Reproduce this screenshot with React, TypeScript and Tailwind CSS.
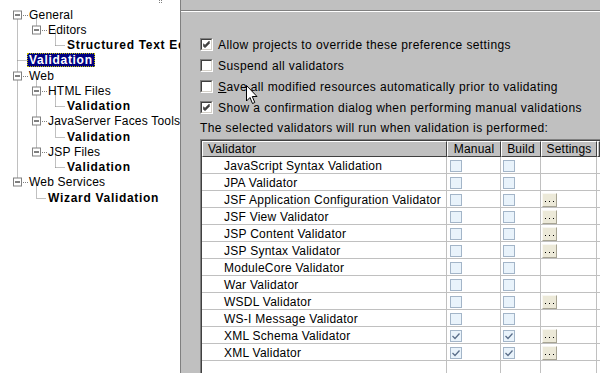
const RH = 15.25;
const TOP = 7;
const cy = (i: number) => Math.round(TOP + RH * i + RH / 2) + 0.5;

const tree = [
  { label: "General", x: 29, box: 17 },
  { label: "Editors", x: 48, box: 36 },
  { label: "Structured Text Editors", x: 67, bold: true },
  { label: "Validation", x: 27, bold: true, selected: true },
  { label: "Web", x: 29, box: 17 },
  { label: "HTML Files", x: 48, box: 36 },
  { label: "Validation", x: 67, bold: true },
  { label: "JavaServer Faces Tools", x: 48, box: 36 },
  { label: "Validation", x: 67, bold: true },
  { label: "JSP Files", x: 48, box: 36 },
  { label: "Validation", x: 67, bold: true },
  { label: "Web Services", x: 29, box: 17 },
  { label: "Wizard Validation", x: 48, bold: true },
];

const validators = [
  { name: "JavaScript Syntax Validation", on: false, settings: false },
  { name: "JPA Validator", on: false, settings: false },
  { name: "JSF Application Configuration Validator", on: false, settings: true },
  { name: "JSF View Validator", on: false, settings: true },
  { name: "JSP Content Validator", on: false, settings: true },
  { name: "JSP Syntax Validator", on: false, settings: true },
  { name: "ModuleCore Validator", on: false, settings: false },
  { name: "War Validator", on: false, settings: false },
  { name: "WSDL Validator", on: false, settings: true },
  { name: "WS-I Message Validator", on: false, settings: false },
  { name: "XML Schema Validator", on: true, settings: true },
  { name: "XML Validator", on: true, settings: true },
];

function TreeLines() {
  const v = (x: number, a: number, b: number, k: string) => (
    <line key={k} x1={x} x2={x} y1={cy(a)} y2={cy(b)} />
  );
  const h = (y: number, a: number, b: number, k: string) => (
    <line key={k} x1={a} x2={b} y1={cy(y)} y2={cy(y)} />
  );
  return (
    <svg className="absolute left-0 top-0" width="180" height="373">
      <g stroke="#808080" strokeDasharray="1 1" fill="none">
        {v(17.5, 0, 11, "r")}
        {v(36.5, 0, 1, "g")}
        {v(55.5, 1, 2, "e")}
        {h(2, 55.5, 65, "e2")}
        {h(3, 17.5, 27, "v")}
        {v(36.5, 4, 9, "w")}
        {v(55.5, 5, 6, "h")}
        {h(6, 55.5, 65, "h2")}
        {v(55.5, 7, 8, "j")}
        {h(8, 55.5, 65, "j2")}
        {v(55.5, 9, 10, "p")}
        {h(10, 55.5, 65, "p2")}
        {v(36.5, 11, 12, "s")}
        {h(12, 36.5, 46, "s2")}
        {tree.map((t, i) =>
          t.box ? h(i, t.box + 4, t.x - 1, "b" + i) : null
        )}
      </g>
      {tree.map((t, i) =>
        t.box ? (
          <g key={"x" + i}>
            <rect x={t.box - 4 + 0.5} y={cy(i) - 4.5} width="8" height="8" fill="#fff" stroke="#808080" />
            <line x1={t.box - 2} x2={t.box + 3} y1={cy(i) - 0.5} y2={cy(i) - 0.5} stroke="#000" />
          </g>
        ) : null
      )}
      <g fill="#808080">
        <rect x="159" y="0" width="1" height="1" />
        <rect x="161" y="0" width="1" height="1" />
        <rect x="159" y="2" width="1" height="1" />
        <rect x="161" y="2" width="1" height="1" />
      </g>
    </svg>
  );
}

function Tree() {
  return (
    <div className="relative w-[180px] shrink-0 bg-white overflow-hidden">
      <TreeLines />
      <div className="relative pt-[7px]">
        {tree.map((t, i) => (
          <div key={i} className="h-[15.25px] flex items-center whitespace-nowrap" style={{ paddingLeft: t.x }}>
            {t.selected ? (
              <span className="h-[14px] px-[1px] leading-[12px] bg-[#000080] text-white font-bold tracking-[0.7px] border border-dotted border-[#c0c000]">
                {t.label}
              </span>
            ) : (
              <span className={t.bold ? "font-bold tracking-[0.7px] text-black" : "tracking-[0.2px] text-black"}>{t.label}</span>
            )}
          </div>
        ))}
      </div>
    </div>
  );
}

function ClassicBox({ on }: { on: boolean }) {
  return (
    <div className="w-[13px] h-[13px] shrink-0 border border-t-[#808080] border-l-[#808080] border-b-white border-r-white">
      <div className="w-full h-full bg-white border border-t-[#404040] border-l-[#404040] border-b-[#d4d0c8] border-r-[#d4d0c8] flex items-center justify-center">
        {on && (
          <svg width="7" height="7" viewBox="0 0 7 7">
            <path d="M0 2.5 L2 4.5 L6.5 0 M0 3.5 L2 5.5 L6.5 1 M0 4.5 L2 6.5 L6.5 2" stroke="#000" strokeWidth="1" fill="none" />
          </svg>
        )}
      </div>
    </div>
  );
}

function CellBox({ on }: { on: boolean }) {
  return (
    <div className="w-[12px] h-[12px] border border-[#a3b5c8] bg-[#e9f3fb] flex items-center justify-center">
      {on && (
        <svg width="8" height="7" viewBox="0 0 8 7">
          <path d="M0.5 3 L3 5.5 L7.5 0.5" stroke="#5b6f8a" strokeWidth="1.3" fill="none" />
        </svg>
      )}
    </div>
  );
}

function DotsButton() {
  return (
    <div className="w-[15px] h-[14px] bg-[#ece9d8] border border-t-[#f8f7f2] border-l-[#f8f7f2] border-b-[#a7a493] border-r-[#a7a493] flex items-center justify-center">
      <svg width="9" height="3" viewBox="0 0 9 3" className="mt-[3px]">
        <rect x="0" y="1" width="1" height="1" fill="#000" />
        <rect x="4" y="1" width="1" height="1" fill="#000" />
        <rect x="8" y="1" width="1" height="1" fill="#000" />
      </svg>
    </div>
  );
}

function Option({ on, children }: { on: boolean; children: React.ReactNode }) {
  return (
    <div className="h-[21px] flex items-center gap-[5px]">
      <ClassicBox on={on} />
      <span className="tracking-[0.4px]">{children}</span>
    </div>
  );
}

const cols = "grid grid-cols-[245px_54px_40px_56px_1fr]";

function Cursor() {
  return (
    <svg className="absolute left-[246px] top-[85px]" width="13" height="20" viewBox="0 0 13 20">
      <path d="M0.5 0.5 L0.5 16 L4 12.5 L6.5 18.5 L8.8 17.5 L6.3 11.5 L11 11.5 Z" fill="#fff" stroke="#000" strokeWidth="1" />
    </svg>
  );
}

export default function App() {
  return (
    <div className="relative w-[600px] h-[373px] flex overflow-hidden bg-[#c0c0c0] font-['Liberation_Sans',Arial,sans-serif] text-[12px] text-black">
      <Tree />
      <div className="w-px shrink-0 bg-[#808080]" />
      <div className="flex-1 flex flex-col min-w-0">
        <div className="h-[10px] shrink-0" />
        <div className="h-[2px] shrink-0 border-t border-t-[#808080] border-b border-b-white" />
        <div className="pl-[19px] pt-[22px] flex flex-col">
          <Option on>Allow projects to override these preference settings</Option>
          <Option on={false}>Suspend all validators</Option>
          <Option on={false}>
            <span className="underline">S</span>ave all modified resources automatically prior to validating
          </Option>
          <Option on>Show a confirmation dialog when performing manual validations</Option>
          <div className="h-[20px] flex items-center tracking-[0.4px]">The selected validators will run when validation is performed:</div>
          <div className="mt-[1px] border-t border-l border-[#808080] bg-white">
            <div className="border-t border-l border-[#404040]">
              <div className={cols + " h-[16px] bg-[#c0c0c0]"}>
                {["Validator", "Manual", "Build", "Settings", ""].map((h, i) => (
                  <div
                    key={i}
                    className={
                      "border-t border-l border-t-white border-l-white border-r border-b border-r-[#404040] border-b-[#404040] leading-[14px] whitespace-nowrap tracking-[0.2px] " +
                      (i === 0 ? "pl-[5px]" : "text-center")
                    }
                  >
                    {h}
                  </div>
                ))}
              </div>
              {validators.map((v) => (
                <div key={v.name} className={cols + " h-[17px] border-b border-[#c0c0c0]"}>
                  <div className="pl-[22px] border-r border-[#c0c0c0] flex items-center whitespace-nowrap tracking-[0.25px]">{v.name}</div>
                  <div className="pl-[3px] border-r border-[#c0c0c0] flex items-center">
                    <CellBox on={v.on} />
                  </div>
                  <div className="pl-[2px] border-r border-[#c0c0c0] flex items-center">
                    <CellBox on={v.on} />
                  </div>
                  <div className="pl-[1px] border-r border-[#c0c0c0] flex items-center">{v.settings && <DotsButton />}</div>
                  <div />
                </div>
              ))}
              <div className={cols + " h-[17px]"}>
                <div className="border-r border-[#c0c0c0]" />
                <div className="border-r border-[#c0c0c0]" />
                <div className="border-r border-[#c0c0c0]" />
                <div className="border-r border-[#c0c0c0]" />
                <div />
              </div>
            </div>
          </div>
        </div>
      </div>
      <Cursor />
    </div>
  );
}
